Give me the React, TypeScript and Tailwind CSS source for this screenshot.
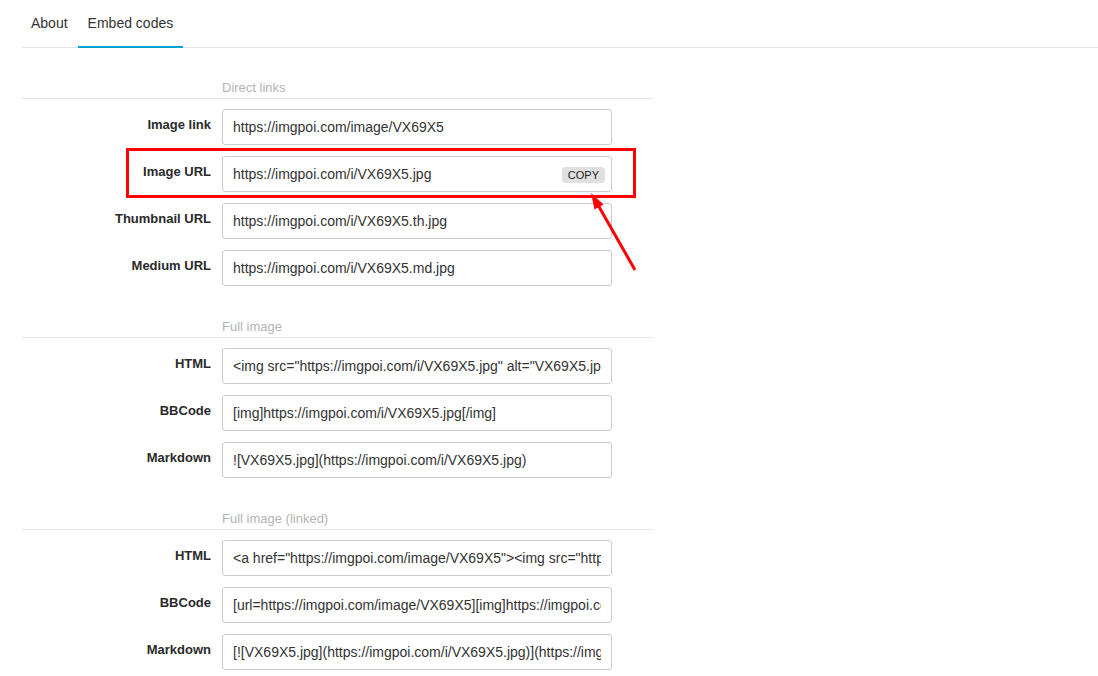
import React from "react";

type Row = { label: string; value: string; copy?: boolean };

const sections: { title: string; first?: boolean; rows: Row[] }[] = [
  {
    title: "Direct links",
    first: true,
    rows: [
      { label: "Image link", value: "https://imgpoi.com/image/VX69X5" },
      { label: "Image URL", value: "https://imgpoi.com/i/VX69X5.jpg", copy: true },
      { label: "Thumbnail URL", value: "https://imgpoi.com/i/VX69X5.th.jpg" },
      { label: "Medium URL", value: "https://imgpoi.com/i/VX69X5.md.jpg" },
    ],
  },
  {
    title: "Full image",
    rows: [
      {
        label: "HTML",
        value: '<img src="https://imgpoi.com/i/VX69X5.jpg" alt="VX69X5.jpg" border="0">',
      },
      { label: "BBCode", value: "[img]https://imgpoi.com/i/VX69X5.jpg[/img]" },
      { label: "Markdown", value: "![VX69X5.jpg](https://imgpoi.com/i/VX69X5.jpg)" },
    ],
  },
  {
    title: "Full image (linked)",
    rows: [
      {
        label: "HTML",
        value:
          '<a href="https://imgpoi.com/image/VX69X5"><img src="https://imgpoi.com/i/VX69X5.jpg" alt="VX69X5.jpg" border="0"></a>',
      },
      {
        label: "BBCode",
        value: "[url=https://imgpoi.com/image/VX69X5][img]https://imgpoi.com/i/VX69X5.jpg[/img][/url]",
      },
      {
        label: "Markdown",
        value: "[![VX69X5.jpg](https://imgpoi.com/i/VX69X5.jpg)](https://imgpoi.com/image/VX69X5)",
      },
    ],
  },
];

export default function App() {
  return (
    <div className="relative min-h-screen bg-white font-['Liberation_Sans',Arial,sans-serif] text-[#333]">
      <nav className="ml-[22px] flex h-[48px] border-b border-[#e5e5e5]">
        <div className="-mb-px flex h-[48px] items-center border-b-2 border-transparent pl-[9px] pr-[10px] text-[14px] leading-[16px] text-[#333]">
          About
        </div>
        <div className="-mb-px flex h-[48px] items-center border-b-2 border-[#00a3d6] px-[10px] text-[14px] leading-[16px] text-[#333]">
          Embed codes
        </div>
      </nav>

      <div className="ml-[22px] w-[630px]">
        {sections.map((s) => (
          <div key={s.title}>
            <div
              className={
                s.first
                  ? "border-b border-[#e5e5e5] pb-[2px] pl-[200px] pt-[32px] text-[13px] leading-[16px] text-[#b4b4b4]"
                  : "border-b border-[#e5e5e5] pb-[2px] pl-[200px] pt-[33px] text-[13px] leading-[16px] text-[#b4b4b4]"
              }
            >
              {s.title}
            </div>
            <div className="mt-[10px] flex flex-col gap-[11px]">
              {s.rows.map((r) => (
                <div key={r.label} className="flex gap-[11px]">
                  <div className="w-[189px] pt-[8px] text-right text-[13px] font-bold leading-[15px] text-[#2a2a2a]">
                    {r.label}
                  </div>
                  <div className="relative w-[390px]">
                    <input
                      readOnly
                      value={r.value}
                      className="block h-[36px] w-[390px] rounded-[3px] border border-[#cccccc] bg-white px-[10px] text-[14px] text-[#333] outline-none"
                    />
                    {r.copy && (
                      <span className="absolute right-[7px] top-[11px] h-[16px] rounded-[4px] bg-[#e0e0e0] px-[6px] text-[11px] leading-[16px] text-[#222]">
                        COPY
                      </span>
                    )}
                  </div>
                </div>
              ))}
            </div>
          </div>
        ))}
      </div>

      <div className="pointer-events-none absolute left-[126px] top-[148px] h-[50px] w-[510px] border-[3px] border-[#ff0000]" />

      <svg
        className="pointer-events-none absolute left-0 top-0"
        width="1098"
        height="676"
        viewBox="0 0 1098 676"
      >
        <line x1="635" y1="270" x2="598" y2="205" stroke="#ff0000" strokeWidth="3" />
        <polygon points="591,193 603.5,204.5 594.5,209.5" fill="#ff0000" />
      </svg>
    </div>
  );
}
